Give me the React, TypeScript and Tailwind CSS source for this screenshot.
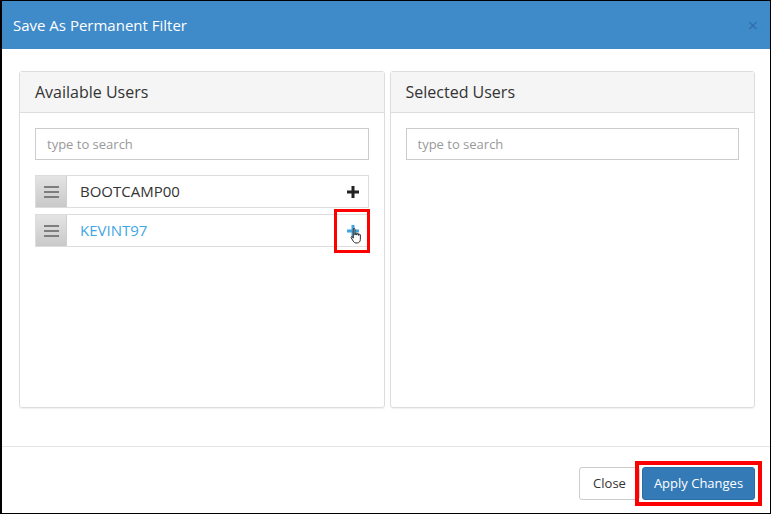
// "Save As Permanent Filter" modal: two user lists with a move-to-selected action.

interface User {
  name: string
  hover?: boolean
}

const AVAILABLE: User[] = [{ name: 'BOOTCAMP00' }, { name: 'KEVINT97', hover: true }]

function HandCursor() {
  return (
    <svg width="15" height="18" viewBox="0 0 14 16" className="absolute left-[11px] top-[12px]">
      <path
        d="M4 1.5c0-.8 1.5-.8 1.5 0V7h.3V5.6c0-.8 1.4-.8 1.4 0V7h.3V6.2c0-.8 1.4-.8 1.4 0V7.4h.3V7c0-.8 1.4-.8 1.4 0v4c0 2-1 3.5-3 3.5H6.5c-1.2 0-2-.8-2.6-1.8L2 9.6c-.4-.8.6-1.4 1.2-.7L4 10z"
        fill="#fff"
        stroke="#222"
        strokeWidth="0.9"
        strokeLinejoin="round"
      />
    </svg>
  )
}

function UserRow({ user }: { user: User }) {
  return (
    <div className="flex h-[33px] border border-[#dddddd] bg-white">
      <div className="flex w-[31px] shrink-0 items-center justify-center border-r border-[#cfcfcf] bg-gradient-to-b from-[#e4e4e4] to-[#c9c9c9]">
        <div className="flex flex-col gap-[3px]">
          <span className="block h-[2px] w-[15px] bg-[#7d7d7d]" />
          <span className="block h-[2px] w-[15px] bg-[#7d7d7d]" />
          <span className="block h-[2px] w-[15px] bg-[#7d7d7d]" />
        </div>
      </div>
      <div className={`flex flex-1 items-center pl-[13px] text-[15px] ${user.hover ? 'text-[#3fa6e6]' : 'text-[#333333]'}`}>
        {user.name}
      </div>
      <div className="relative flex w-[30px] items-center justify-center">
        <svg width="12" height="12" viewBox="0 0 12 12">
          <path d="M6 0v12M0 6h12" stroke={user.hover ? '#3fa6e6' : '#222222'} strokeWidth="3" />
        </svg>
        {user.hover && (
          <>
            <HandCursor />
            <div className="absolute left-[-4px] top-[-6px] h-[44px] w-[36px] border-[3px] border-[#ff0000]" />
          </>
        )}
      </div>
    </div>
  )
}

function Panel({ title, users }: { title: string; users: User[] }) {
  return (
    <div className="flex h-[337px] flex-1 flex-col rounded-[3px] border border-[#dddddd] shadow-[0_1px_1px_rgba(0,0,0,0.06)]">
      <div className="flex h-[41px] items-center border-b border-[#dddddd] bg-[#f5f5f5] pl-[15px] text-[16px] text-[#333333]">
        {title}
      </div>
      <div className="px-[15px] pt-[15px]">
        <input
          type="text"
          placeholder="type to search"
          className="h-[32px] w-full border border-[#cccccc] px-[11px] text-[13px] text-[#555555] placeholder:text-[#999999] focus:outline-none"
        />
        <div className="mt-[15px] flex flex-col gap-[6px]">
          {users.map(u => (
            <UserRow key={u.name} user={u} />
          ))}
        </div>
      </div>
    </div>
  )
}

export default function App() {
  return (
    <div className="h-[514px] w-[771px] border border-l-2 border-black bg-white font-['Open_Sans','Liberation_Sans',sans-serif]">
      <div className="flex h-[48px] items-center justify-between bg-[#3f8ac9] pl-[11px] pr-[12px]">
        <span className="text-[15px] text-white">Save As Permanent Filter</span>
        <span className="text-[18px] leading-none text-[#2f6ea7]">×</span>
      </div>
      <div className="flex gap-[5px] pl-[17px] pr-[15px] pt-[22px]">
        <Panel title="Available Users" users={AVAILABLE} />
        <Panel title="Selected Users" users={[]} />
      </div>
      <div className="mt-[38px] flex h-[65px] items-start justify-end gap-[2px] border-t border-[#e5e5e5] pr-[15px] pt-[20px]">
        <button className="h-[33px] w-[61px] rounded-[3px] border border-[#cccccc] bg-white text-[13px] text-[#333333]">
          Close
        </button>
        <div className="relative">
          <button className="h-[33px] w-[113px] rounded-[3px] border border-[#2e6da4] bg-[#337ab7] text-[13px] text-white">
            Apply Changes
          </button>
          <div className="absolute left-[-7px] top-[-6px] h-[45px] w-[127px] border-[4px] border-[#ff0000]" />
        </div>
      </div>
    </div>
  )
}
